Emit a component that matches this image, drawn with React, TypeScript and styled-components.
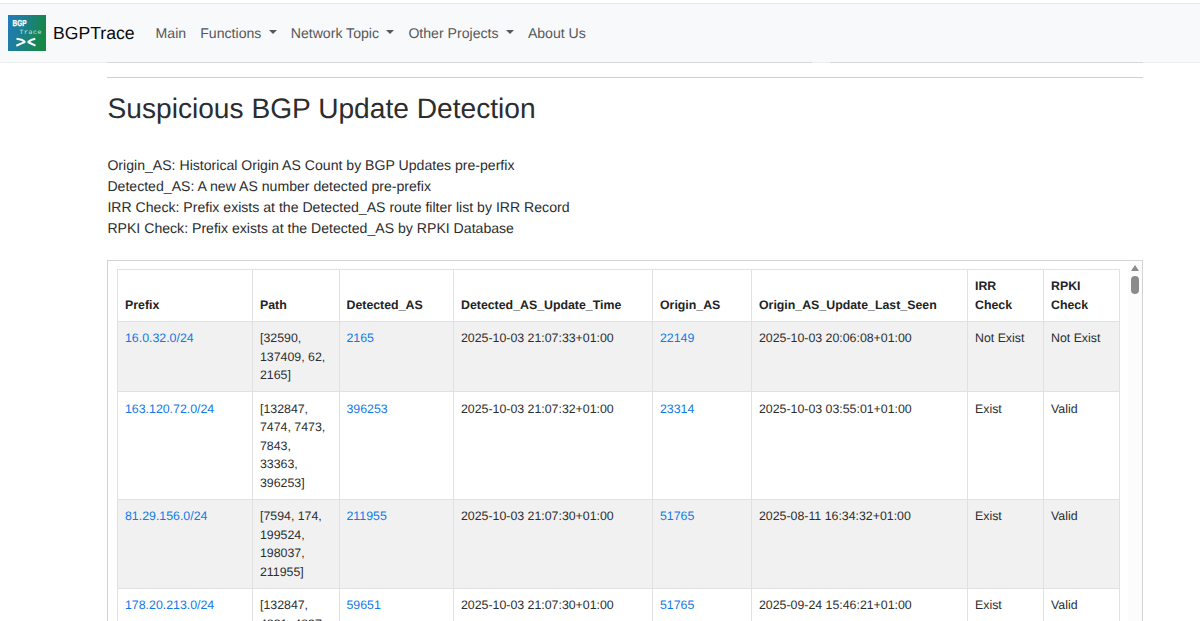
import React from "react";
import styled, { createGlobalStyle } from "styled-components";

const GlobalStyle = createGlobalStyle`
  * { box-sizing: border-box; }
  body {
    margin: 0;
    background: #fff;
    color: #2b2d2f;
    font-family: "Liberation Sans", Arial, sans-serif;
    font-size: 14.1px;
    line-height: 1.5;
    text-rendering: geometricPrecision;
  }
`;

const Page = styled.div`
  height: 621px;
  overflow: hidden;
  border-top: 3px solid #fff;
  display: flex;
  flex-direction: column;
`;

const Navbar = styled.nav`
  flex: none;
  height: 60px;
  display: flex;
  align-items: center;
  padding: 0 8px 1px;
  background: #f8f9fa;
  border-top: 1px solid #e6e8ea;
  border-bottom: 1px solid #eceeef;
`;

const Logo = styled.svg`
  display: block;
  width: 38px;
  height: 36px;
  margin-right: 7px;
`;

const Brand = styled.a`
  color: #0b0b0b;
  font-size: 17.62px;
  margin-right: 14px;
  padding-top: 2px;
`;

const NavLink = styled.a`
  display: flex;
  align-items: center;
  color: #55585b;
  padding: 2px 7.05px 0;
`;

const Caret = styled.span`
  margin-left: 7.3px;
  margin-top: -2px;
  border-top: 4.2px solid currentColor;
  border-left: 4px solid transparent;
  border-right: 4px solid transparent;
`;

const Content = styled.main`
  width: 1036px;
  margin-left: 107px;
  flex: 1;
  min-height: 0;
  display: flex;
  flex-direction: column;
`;

const CardEdges = styled.div`
  flex: none;
  display: flex;
  justify-content: space-between;
  margin-top: -1px;
`;

const CardEdge = styled.div<{ $width: number }>`
  width: ${(p) => p.$width}px;
  height: 1px;
  background: #d5d7d8;
`;

const Rule = styled.hr`
  width: 100%;
  margin: 14px 0 0;
  border: 0;
  border-top: 1px solid #d0d0d0;
`;

const Title = styled.h2`
  margin: 14px 0 0;
  padding-left: 0.5px;
  font-size: 28.15px;
  font-weight: 400;
  line-height: 34px;
`;

const Description = styled.p`
  margin: 29px 0 0;
  padding-left: 0.4px;
  line-height: 21px;
`;

const ScrollPanel = styled.section`
  flex: 1;
  min-height: 0;
  margin-top: 21px;
  display: flex;
  justify-content: space-between;
  border: 1px solid #d2d3d4;
  border-bottom: 0;
  overflow: hidden;
`;

const TableArea = styled.div`
  padding: 8px 0 0 9px;
`;

const Table = styled.table`
  width: 1002.5px;
  table-layout: fixed;
  border-collapse: collapse;
  font-size: 12.35px;
  line-height: 18.56px;
`;

const HeadCell = styled.th`
  padding: 7.4px 7px 6.4px;
  border: 1px solid #dfe1e3;
  color: #212325;
  text-align: left;
  vertical-align: bottom;
`;

const Row = styled.tr<{ $striped: boolean }>`
  background: ${(p) => (p.$striped ? "#f1f1f1" : "#fff")};
`;

const Cell = styled.td`
  padding: 7.4px 7px 6.4px;
  border: 1px solid #dfe1e3;
  vertical-align: top;
`;

const Link = styled.a`
  color: #0f79e6;
`;

const Scrollbar = styled.div`
  width: 14px;
  background: #fcfcfc;
  display: flex;
  flex-direction: column;
  align-items: center;
  padding-top: 4px;
`;

const ScrollArrow = styled.span`
  border-bottom: 6px solid #8b8b8b;
  border-left: 4px solid transparent;
  border-right: 4px solid transparent;
`;

const ScrollThumb = styled.span`
  width: 8px;
  height: 18px;
  margin-top: 5px;
  border-radius: 4px;
  background: #8b8b8b;
`;

const navItems = [
  { label: "Main", menu: false },
  { label: "Functions", menu: true },
  { label: "Network Topic", menu: true },
  { label: "Other Projects", menu: true },
  { label: "About Us", menu: false },
];

const columns = [
  { label: "Prefix", width: 135 },
  { label: "Path", width: 86.5 },
  { label: "Detected_AS", width: 114.5 },
  { label: "Detected_AS_Update_Time", width: 199 },
  { label: "Origin_AS", width: 99 },
  { label: "Origin_AS_Update_Last_Seen", width: 216 },
  { label: "IRR Check", width: 76 },
  { label: "RPKI Check", width: 76 },
];

const linkColumns = [0, 2, 4];

const rows = [
  ["16.0.32.0/24", "[32590, 137409, 62, 2165]", "2165", "2025-10-03 21:07:33+01:00", "22149", "2025-10-03 20:06:08+01:00", "Not Exist", "Not Exist"],
  ["163.120.72.0/24", "[132847, 7474, 7473, 7843, 33363, 396253]", "396253", "2025-10-03 21:07:32+01:00", "23314", "2025-10-03 03:55:01+01:00", "Exist", "Valid"],
  ["81.29.156.0/24", "[7594, 174, 199524, 198037, 211955]", "211955", "2025-10-03 21:07:30+01:00", "51765", "2025-08-11 16:34:32+01:00", "Exist", "Valid"],
  ["178.20.213.0/24", "[132847, 4831, 4837, 59651]", "59651", "2025-10-03 21:07:30+01:00", "51765", "2025-09-24 15:46:21+01:00", "Exist", "Valid"],
];

const BrandLogo = () => (
  <Logo viewBox="0 0 38 36">
    <defs>
      <linearGradient id="logoFill" x1="0" y1="0" x2="1" y2="0.25">
        <stop offset="0" stopColor="#217bbd" />
        <stop offset="0.5" stopColor="#1c808a" />
        <stop offset="1" stopColor="#178746" />
      </linearGradient>
    </defs>
    <rect width="38" height="36" fill="url(#logoFill)" />
    <text x="4.5" y="10.8" fontFamily="Liberation Sans" fontWeight="700" fontSize="8.6" textLength="14" lengthAdjust="spacingAndGlyphs" fill="#fff" stroke="#fff" strokeWidth="0.3">BGP</text>
    <text x="11.5" y="19.3" fontFamily="Liberation Mono" fontSize="6.5" textLength="22" fill="#c9e8e8">Trace</text>
    <path d="M8.5 23.7 13.5 24.7 17 27 13.5 28.4 8.3 30.8M27.3 23.7 23.8 24.7 20 27 23.5 28.8 27.5 30.6" fill="none" stroke="#f3fbfb" strokeWidth="2.1" strokeLinejoin="bevel" />
  </Logo>
);

export default function App() {
  return (
    <>
      <GlobalStyle />
      <Page>
        <Navbar>
          <BrandLogo />
          <Brand>BGPTrace</Brand>
          {navItems.map((item) => (
            <NavLink key={item.label}>
              {item.label}
              {item.menu && <Caret />}
            </NavLink>
          ))}
        </Navbar>
        <Content>
          <CardEdges>
            <CardEdge $width={705} />
            <CardEdge $width={313} />
          </CardEdges>
          <Rule />
          <Title>Suspicious BGP Update Detection</Title>
          <Description>
            Origin_AS: Historical Origin AS Count by BGP Updates pre-perfix<br />
            Detected_AS: A new AS number detected pre-prefix<br />
            IRR Check: Prefix exists at the Detected_AS route filter list by IRR Record<br />
            RPKI Check: Prefix exists at the Detected_AS by RPKI Database
          </Description>
          <ScrollPanel>
            <TableArea>
              <Table>
                <colgroup>
                  {columns.map((c) => (
                    <col key={c.label} style={{ width: c.width }} />
                  ))}
                </colgroup>
                <thead>
                  <tr>
                    {columns.map((c) => (
                      <HeadCell key={c.label}>{c.label}</HeadCell>
                    ))}
                  </tr>
                </thead>
                <tbody>
                  {rows.map((row, r) => (
                    <Row key={row[0]} $striped={r % 2 === 0}>
                      {row.map((value, c) => (
                        <Cell key={c}>{linkColumns.includes(c) ? <Link>{value}</Link> : value}</Cell>
                      ))}
                    </Row>
                  ))}
                </tbody>
              </Table>
            </TableArea>
            <Scrollbar>
              <ScrollArrow />
              <ScrollThumb />
            </Scrollbar>
          </ScrollPanel>
        </Content>
      </Page>
    </>
  );
}
